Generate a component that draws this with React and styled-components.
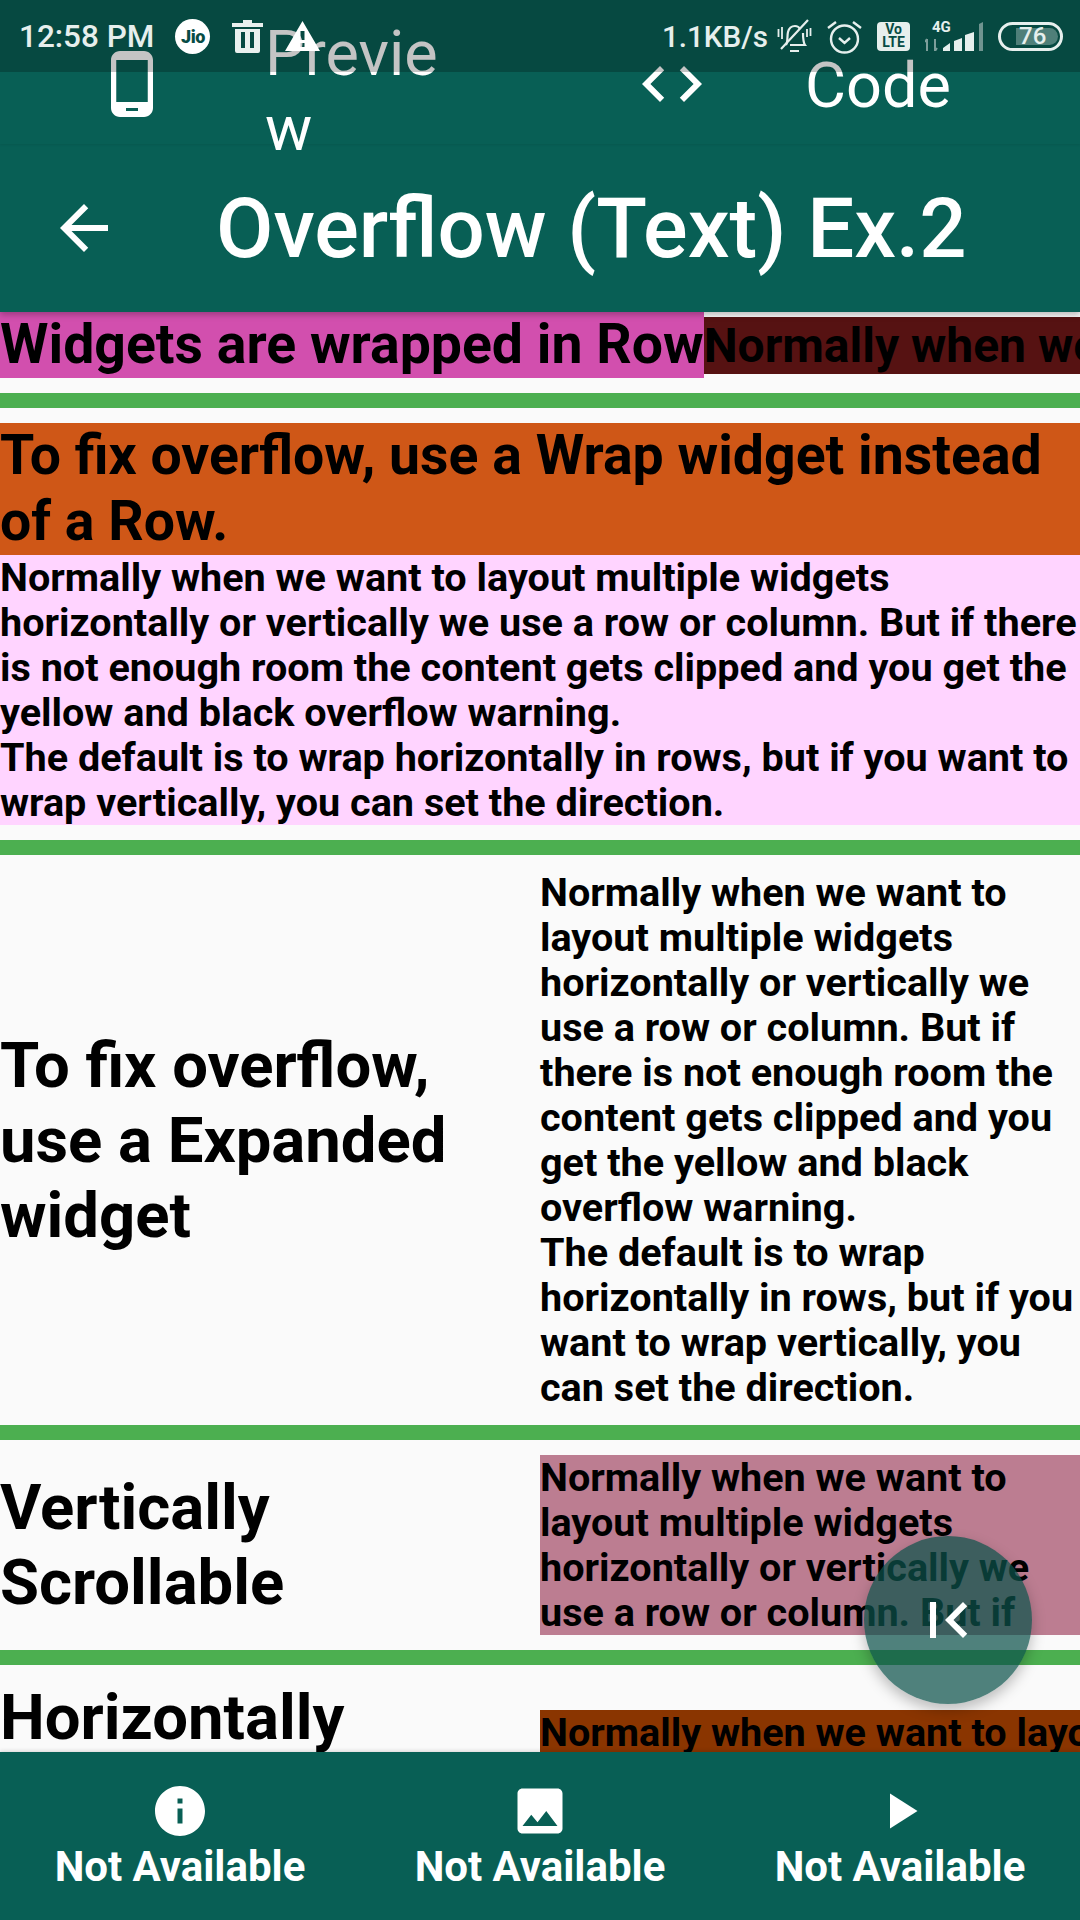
import React from 'react';
import styled, { createGlobalStyle } from 'styled-components';

const TEAL = '#085f55';
const BODY =
  'Normally when we want to layout multiple widgets horizontally or vertically we use a row or column. But if there is not enough room the content gets clipped and you get the yellow and black overflow warning.\nThe default is to wrap horizontally in rows, but if you want to wrap vertically, you can set the direction.';

const GlobalStyle = createGlobalStyle`
  html, body {
    margin: 0;
    padding: 0;
    background: #fafafa;
  }
  * {
    box-sizing: border-box;
  }
`;

const Screen = styled.div`
  position: relative;
  width: 1080px;
  height: 1920px;
  display: flex;
  flex-direction: column;
  overflow: hidden;
  font-family: Roboto, 'Liberation Sans', sans-serif;
  background: #fafafa;
`;

const StatusBar = styled.div`
  position: absolute;
  top: 0;
  left: 0;
  right: 0;
  height: 72px;
  padding: 0 17px 0 19px;
  display: flex;
  align-items: center;
  justify-content: space-between;
  background: rgba(0, 0, 0, 0.23);
  color: #e6efed;
  z-index: 5;
`;

const StatusGroup = styled.div`
  display: flex;
  align-items: center;
  gap: ${(p) => p.$gap || 0}px;
`;

const StatusText = styled.span`
  font-size: ${(p) => p.$size}px;
  font-weight: 500;
  line-height: 36px;
  padding-top: 2px;
  margin-right: ${(p) => p.$mr || 0}px;
`;

const StatusSpacer = styled.span`
  width: ${(p) => p.$w}px;
`;

const JioBadge = styled.span`
  width: 35px;
  height: 35px;
  border-radius: 50%;
  background: #fff;
  color: #074c45;
  font-size: 18px;
  font-weight: 900;
  display: flex;
  align-items: center;
  justify-content: center;
  letter-spacing: -0.5px;
`;

const LteBadge = styled.span`
  width: 33px;
  height: 29px;
  border-radius: 4px;
  background: #e6efed;
  color: #074c45;
  font-size: 14px;
  line-height: 13px;
  font-weight: 700;
  text-align: center;
  display: flex;
  flex-direction: column;
  justify-content: center;
`;

const SignalWrap = styled.span`
  position: relative;
  display: block;
  width: 58px;
  height: 30px;
`;

const FourG = styled.span`
  position: absolute;
  top: -1px;
  left: 7px;
  font-size: 15px;
  line-height: 15px;
  font-weight: 700;
`;

const Battery = styled.span`
  width: 65px;
  height: 29px;
  border: 3px solid #e6efed;
  border-radius: 15px;
  padding: 3px 2px 3px 15px;
  display: flex;
`;

const BatteryFill = styled.span`
  flex: 1;
  border-radius: 0 9px 9px 0;
  background: #4f7f79;
  color: #e6efed;
  font-size: 24px;
  line-height: 17px;
  font-weight: 500;
  padding-left: 3px;
`;

const TabBar = styled.div`
  height: 144px;
  flex: none;
  padding-top: 24px;
  display: grid;
  grid-template-columns: 540px 540px;
  background: ${TEAL};
  box-shadow: 0 1px 2px rgba(0, 0, 0, 0.08);
  z-index: 2;
`;

const Tab = styled.div`
  height: 120px;
  padding-left: 96px;
  display: flex;
  align-items: center;
  gap: 97px;
  color: #fff;
`;

const TabLabel = styled.div`
  width: 176px;
  font-size: 63px;
  line-height: 75px;
  color: #fff;
  overflow-wrap: anywhere;
  flex: none;
  margin-top: ${(p) => p.$offset || 0}px;
`;

const AppBar = styled.div`
  height: 168px;
  flex: none;
  padding-left: 48px;
  display: flex;
  align-items: center;
  gap: 96px;
  background: ${TEAL};
  color: #fff;
  box-shadow: 0 3px 6px rgba(0, 0, 0, 0.25);
  z-index: 1;
`;

const Title = styled.h1`
  margin: 0;
  padding-top: 2px;
  font-size: 83.3px;
  line-height: 98px;
  font-weight: 500;
  white-space: nowrap;
`;

const Content = styled.div`
  flex: 1;
  min-height: 0;
  overflow: hidden;
  color: #000;
`;

const Divider = styled.div`
  height: 15px;
  background: #4caf50;
`;

const WrappedRow = styled.div`
  display: flex;
  align-items: center;
  margin-bottom: 15px;
  white-space: nowrap;
  overflow: hidden;
`;

const Heading = styled.div`
  flex: none;
  font-size: 55.4px;
  line-height: 66px;
  font-weight: 700;
  background: ${(p) => p.$bg || 'transparent'};
`;

const FullHeading = styled(Heading)`
  white-space: normal;
`;

const SmallLine = styled.div`
  flex: 1;
  min-width: 0;
  overflow: hidden;
  height: 57px;
  font-size: 48px;
  line-height: 57px;
  font-weight: 700;
  background: #561212;
`;

const FixBlock = styled.div`
  margin: 15px 0;
`;

const Body = styled.div`
  font-size: 39.6px;
  line-height: 45px;
  font-weight: 700;
  white-space: pre-line;
  overflow: ${(p) => (p.$clip ? 'hidden' : 'visible')};
  height: ${(p) => (p.$h ? `${p.$h}px` : 'auto')};
  background: ${(p) => p.$bg || 'transparent'};
`;

const TwoCol = styled.div`
  display: grid;
  grid-template-columns: 540px 540px;
  align-items: center;
  padding: 15px 0;
`;

const BigText = styled.div`
  font-size: 63.4px;
  line-height: 75px;
  font-weight: 700;
`;

const NoWrapBody = styled(Body)`
  white-space: nowrap;
`;

const BottomNav = styled.div`
  height: 168px;
  flex: none;
  display: grid;
  grid-template-columns: repeat(3, 360px);
  background: ${TEAL};
  color: #fff;
  box-shadow: 0 -1px 4px rgba(0, 0, 0, 0.15);
  z-index: 1;
`;

const NavItem = styled.div`
  padding-top: 29px;
  display: flex;
  flex-direction: column;
  align-items: center;
`;

const NavLabel = styled.div`
  font-size: 42px;
  line-height: 50px;
  font-weight: 700;
  margin-top: 1px;
`;

const Fab = styled.div`
  position: absolute;
  left: 864px;
  top: 1536px;
  width: 168px;
  height: 168px;
  border-radius: 50%;
  background: rgba(12, 82, 75, 0.72);
  box-shadow: 0 6px 14px rgba(0, 0, 0, 0.25);
  color: #fff;
  display: flex;
  align-items: center;
  justify-content: center;
  z-index: 3;
`;

const Glyph = styled.svg`
  flex: none;
  display: block;
`;

const Icon = ({ d, size = 72 }) => (
  <Glyph width={size} height={size} viewBox="0 0 24 24" fill="currentColor">
    <path d={d} />
  </Glyph>
);

const ICONS = {
  phone: 'M16 1H8C6.34 1 5 2.34 5 4v16c0 1.66 1.34 3 3 3h8c1.66 0 3-1.34 3-3V4c0-1.66-1.34-3-3-3zm-2 20h-4v-1h4v1zm3.25-3H6.75V4h10.5v14z',
  code: 'M9.4 16.6L4.8 12l4.6-4.6L8 6l-6 6 6 6 1.4-1.4zm5.2 0l4.6-4.6-4.6-4.6L16 6l6 6-6 6-1.4-1.4z',
  back: 'M20 11H7.83l5.59-5.59L12 4l-8 8 8 8 1.41-1.41L7.83 13H20v-2z',
  info: 'M12 2C6.48 2 2 6.48 2 12s4.48 10 10 10 10-4.48 10-10S17.52 2 12 2zm1 15h-2v-6h2v6zm0-8h-2V7h2v2z',
  image: 'M21 19V5c0-1.1-.9-2-2-2H5c-1.1 0-2 .9-2 2v14c0 1.1.9 2 2 2h14c1.1 0 2-.9 2-2zM8.5 13.5l2.5 3.01L14.5 12l4.5 6H5l3.5-4.5z',
  play: 'M8 5v14l11-7z',
  first: 'M18.41 16.59L13.82 12l4.59-4.59L17 6l-6 6 6 6zM6 6h2v12H6z',
};

const TrashIcon = () => (
  <Glyph width="31" height="33" viewBox="0 0 31 33" fill="#e9f0ee">
    <path d="M11 0h9v3h11v4H0V3h11zM3 9h25v22a2 2 0 0 1-2 2H5a2 2 0 0 1-2-2zm6 3v16h4V12zm9 0v16h4V12z" fillRule="evenodd" />
  </Glyph>
);

const WarnIcon = () => (
  <Glyph width="35" height="31" viewBox="0 0 35 31" fill="#fff">
    <path d="M17.5 0L35 30H0zM15.5 10v9h4v-9zm0 12v4h4v-4z" fillRule="evenodd" />
  </Glyph>
);

const BellOffIcon = () => (
  <Glyph width="35" height="34" viewBox="0 0 35 34" fill="none" stroke="#e6efed" strokeWidth="2.2">
    <path d="M9 26c2-3 1-9 2-13 1-4 4-6 7-6 2 0 4 1 5 3M26 14c0 5 0 9 2 12H13" />
    <path d="M31 1L4 30M13 32h9" />
    <path d="M1.5 10v8M5 8v12M30 10v8M33.5 9v8" strokeWidth="1.8" />
  </Glyph>
);

const AlarmIcon = () => (
  <Glyph width="35" height="35" viewBox="0 0 35 35" fill="none" stroke="#e6efed" strokeWidth="2.4">
    <circle cx="17.5" cy="20" r="13.5" />
    <path d="M12 19l5.5 5 5.5-5M1 9l8-6M34 9l-8-6" />
  </Glyph>
);

const SignalBars = styled.svg`
  position: absolute;
  top: 0;
  left: 0;
`;

const SignalIcon = () => (
  <SignalBars width="58" height="30" viewBox="0 0 58 30">
    <path d="M2 18v12M0 21l2-3M10 30V18M10 30l2-3" stroke="#7d9e9a" strokeWidth="2" fill="none" />
    <path d="M18 30v-3l7-5v8zM29 30V20l8-3v13zM40 30V14l9-3v19z" fill="#e6efed" />
    <path d="M54 30V3l4-2v29z" fill="#6f9490" />
  </SignalBars>
);

function App() {
  return (
    <Screen>
      <GlobalStyle />
      <StatusBar>
        <StatusGroup>
          <StatusText $size={31.5} $mr={21}>12:58 PM</StatusText>
          <JioBadge>Jio</JioBadge>
          <StatusSpacer $w={22} />
          <TrashIcon />
          <StatusSpacer $w={22} />
          <WarnIcon />
        </StatusGroup>
        <StatusGroup $gap={15}>
          <StatusText $size={29.6} $mr={-6}>1.1KB/s</StatusText>
          <BellOffIcon />
          <AlarmIcon />
          <LteBadge>
            <span>Vo</span>
            <span>LTE</span>
          </LteBadge>
          <SignalWrap>
            <FourG>4G</FourG>
            <SignalIcon />
          </SignalWrap>
          <Battery>
            <BatteryFill>76</BatteryFill>
          </Battery>
        </StatusGroup>
      </StatusBar>

      <TabBar>
        <Tab>
          <Icon d={ICONS.phone} />
          <TabLabel $offset={14}>Preview</TabLabel>
        </Tab>
        <Tab>
          <Icon d={ICONS.code} />
          <TabLabel $offset={2}>Code</TabLabel>
        </Tab>
      </TabBar>

      <AppBar>
        <Icon d={ICONS.back} />
        <Title>Overflow (Text) Ex.2</Title>
      </AppBar>

      <Content>
        <WrappedRow>
          <Heading $bg="#d24fae">Widgets are wrapped in Row</Heading>
          <SmallLine>{BODY}</SmallLine>
        </WrappedRow>
        <Divider />
        <FixBlock>
          <FullHeading $bg="#cf5717">To fix overflow, use a Wrap widget instead of a Row.</FullHeading>
          <Body $bg="#ffd4ff">{BODY}</Body>
        </FixBlock>
        <Divider />
        <TwoCol>
          <BigText>To fix overflow, use a Expanded widget</BigText>
          <Body>{BODY}</Body>
        </TwoCol>
        <Divider />
        <TwoCol>
          <BigText>Vertically Scrollable</BigText>
          <Body $bg="#bc7d91" $clip $h={180}>{BODY}</Body>
        </TwoCol>
        <Divider />
        <TwoCol>
          <BigText>Horizontally Scrollable</BigText>
          <NoWrapBody $bg="#8a3500" $clip $h={90}>{BODY}</NoWrapBody>
        </TwoCol>
      </Content>

      <BottomNav>
        <NavItem>
          <Icon d={ICONS.info} size={60} />
          <NavLabel>Not Available</NavLabel>
        </NavItem>
        <NavItem>
          <Icon d={ICONS.image} size={60} />
          <NavLabel>Not Available</NavLabel>
        </NavItem>
        <NavItem>
          <Icon d={ICONS.play} size={60} />
          <NavLabel>Not Available</NavLabel>
        </NavItem>
      </BottomNav>

      <Fab>
        <Icon d={ICONS.first} />
      </Fab>
    </Screen>
  );
}

export default App;
